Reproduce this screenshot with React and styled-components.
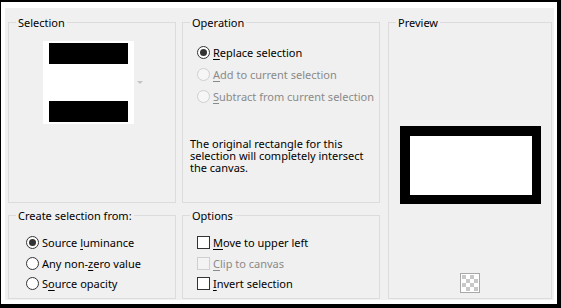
import React from 'react'
import styled, { createGlobalStyle } from 'styled-components'

const Global = createGlobalStyle`
  html, body {
    margin: 0;
    padding: 0;
    background: #000;
  }
  body {
    font-family: "Noto Sans", "Open Sans", sans-serif;
    font-size: 11px;
    color: #000;
  }
`

const Frame = styled.div`
  width: 561px;
  height: 308px;
  box-sizing: border-box;
  background: #000;
  padding: 2px 4px 4px 1px;
`

const Sheet = styled.div`
  height: 100%;
  box-sizing: border-box;
  background: #fff;
  padding: 6px 3px 4px 4px;
`

const Panel = styled.div`
  height: 100%;
  box-sizing: border-box;
  background: #f0f0f0;
  padding: 7px 1px 1px 3px;
  display: grid;
  grid-template-columns: 168px 198px 166px;
  grid-template-rows: 188px 91px;
  column-gap: 6px;
  row-gap: 5px;
`

const Group = styled.fieldset`
  margin: 0;
  margin-left: ${p => p.$shift || 0}px;
  padding: 0;
  min-width: 0;
  border: 1px solid #dcdcdc;
  grid-column: ${p => p.$col};
  grid-row: ${p => p.$row};
  display: flex;
  flex-direction: column;
`

const Legend = styled.legend`
  margin-left: 7px;
  padding: 0 2px;
  line-height: 15px;
  font-size: 11px;
`

const Swatch = styled.div`
  margin: 11px 0 0 34px;
  display: flex;
  align-items: center;
`

const SwatchBox = styled.div`
  width: 91px;
  height: 83px;
  box-sizing: border-box;
  background: #fff;
  padding: 2px 6px;
  display: flex;
  flex-direction: column;
  justify-content: space-between;
`

const Bar = styled.div`
  height: 21px;
  background: #000;
`

const DropArrow = styled.div`
  margin-left: 3px;
  width: 0;
  height: 0;
  border-left: 3px solid transparent;
  border-right: 3px solid transparent;
  border-top: 3px solid #c4c4c4;
`

const Options = styled.div`
  display: flex;
  flex-direction: column;
  margin: ${p => p.$top}px 0 0 ${p => p.$left}px;
`

const Row = styled.label`
  display: flex;
  align-items: center;
  height: ${p => p.$h}px;
  gap: 3px;
  font-size: 11px;
  color: ${p => (p.$off ? '#8a8a8a' : '#000')};
  white-space: nowrap;
`

const Radio = styled.span`
  width: 13px;
  height: 13px;
  box-sizing: border-box;
  border-radius: 50%;
  border: 1px solid ${p => (p.$off ? '#cfcfcf' : '#333')};
  background: ${p => (p.$off ? '#f6f6f6' : '#fff')};
  display: flex;
  align-items: center;
  justify-content: center;
  flex: none;

  &::after {
    content: '';
    width: 7px;
    height: 7px;
    border-radius: 50%;
    background: #333;
    display: ${p => (p.$on ? 'block' : 'none')};
  }
`

const Check = styled.span`
  width: 13px;
  height: 13px;
  box-sizing: border-box;
  border: 1px solid ${p => (p.$off ? '#cfcfcf' : '#333')};
  background: ${p => (p.$off ? '#f3f3f3' : '#fff')};
  flex: none;
`

const Key = styled.span`
  text-decoration: underline;
  text-underline-offset: 2px;
`

const Note = styled.p`
  margin: 31px 0 0 7px;
  font-size: 11px;
  line-height: 12px;
  white-space: nowrap;
`

const PreviewBody = styled.div`
  flex: 1;
  display: flex;
  flex-direction: column;
  align-items: center;
  padding: 96px 0 5px;
`

const PreviewRect = styled.div`
  width: 141px;
  height: 78px;
  box-sizing: border-box;
  border: 10px solid #000;
  border-right-width: 9px;
  border-bottom-width: 9px;
  background: #fff;
`

const Checker = styled.svg`
  margin-top: auto;
  display: block;
`

function Label({ text, k }) {
  const i = k == null ? -1 : k
  if (i < 0) return <span>{text}</span>
  return (
    <span>
      {text.slice(0, i)}
      <Key>{text[i]}</Key>
      {text.slice(i + 1)}
    </span>
  )
}

function RadioRow({ text, k, on, off, h }) {
  return (
    <Row $off={off} $h={h}>
      <Radio $on={on} $off={off} />
      <Label text={text} k={k} />
    </Row>
  )
}

function CheckRow({ text, k, off, h }) {
  return (
    <Row $off={off} $h={h}>
      <Check $off={off} />
      <Label text={text} k={k} />
    </Row>
  )
}

export default function App() {
  return (
    <>
      <Global />
      <Frame>
        <Sheet>
          <Panel>
            <Group $col="1" $row="1">
              <Legend>Selection</Legend>
              <Swatch>
                <SwatchBox>
                  <Bar />
                  <Bar />
                </SwatchBox>
                <DropArrow />
              </Swatch>
            </Group>

            <Group $col="2" $row="1">
              <Legend>Operation</Legend>
              <Options $top={11} $left={14}>
                <RadioRow text="Replace selection" k={0} on h={22} />
                <RadioRow text="Add to current selection" k={0} off h={22} />
                <RadioRow text="Subtract from current selection" k={0} off h={22} />
              </Options>
              <Note>
                The original rectangle for this
                <br />
                selection will completely intersect
                <br />
                the canvas.
              </Note>
            </Group>

            <Group $col="3" $row="1 / span 2" $shift={2}>
              <Legend>Preview</Legend>
              <PreviewBody>
                <PreviewRect />
                <Checker width="20" height="20" viewBox="0 0 20 20">
                  <rect x="0.5" y="0.5" width="19" height="19" fill="#fff" stroke="#a8a8a8" />
                  {[0, 1, 2, 3].map(r =>
                    [0, 1, 2, 3].map(c =>
                      (r + c) % 2 === 0 ? (
                        <rect key={r + '-' + c} x={2 + c * 4} y={2 + r * 4} width="4" height="4" fill="#c8c8c8" />
                      ) : null
                    )
                  )}
                </Checker>
              </PreviewBody>
            </Group>

            <Group $col="1" $row="2">
              <Legend>Create selection from:</Legend>
              <Options $top={9} $left={17}>
                <RadioRow text="Source luminance" k={7} on h={21} />
                <RadioRow text="Any non-zero value" k={8} h={20} />
                <RadioRow text="Source opacity" k={1} h={21} />
              </Options>
            </Group>

            <Group $col="2" $row="2">
              <Legend>Options</Legend>
              <Options $top={9} $left={14}>
                <CheckRow text="Move to upper left" k={0} h={21} />
                <CheckRow text="Clip to canvas" k={0} off h={20} />
                <CheckRow text="Invert selection" k={0} h={21} />
              </Options>
            </Group>
          </Panel>
        </Sheet>
      </Frame>
    </>
  )
}
